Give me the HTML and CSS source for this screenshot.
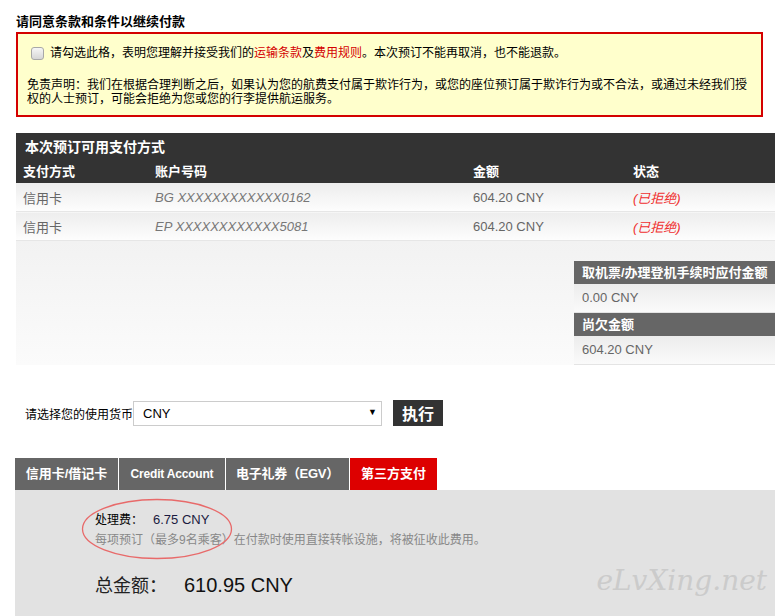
FILE: index.html
```html
<!DOCTYPE html>
<html lang="zh-CN">
<head>
  <meta charset="UTF-8">
  <title>付款</title>
  <link rel="stylesheet" href="styles.css">
</head>
<body>
  <div class="page">
    <h2 class="terms-title">请同意条款和条件以继续付款</h2>
    <div class="notice">
      <label class="agree"><input type="checkbox">请勾选此格，表明您理解并接受我们的<a href="#">运输条款</a>及<a href="#">费用规则</a>。本次预订不能再取消，也不能退款。</label>
      <p class="disclaimer">免责声明：我们在根据合理判断之后，如果认为您的航费支付属于欺诈行为，或您的座位预订属于欺诈行为或不合法，或通过未经我们授权的人士预订，可能会拒绝为您或您的行李提供航运服务。</p>
    </div>

    <table class="methods">
      <colgroup>
        <col style="width:132px">
        <col style="width:318px">
        <col style="width:160px">
        <col>
      </colgroup>
      <thead>
        <tr><th colspan="4" class="methods-title">本次预订可用支付方式</th></tr>
        <tr><th>支付方式</th><th>账户号码</th><th>金额</th><th>状态</th></tr>
      </thead>
      <tbody>
        <tr><td>信用卡</td><td class="acct">BG XXXXXXXXXXXX0162</td><td>604.20 CNY</td><td class="status">(已拒绝)</td></tr>
        <tr><td>信用卡</td><td class="acct">EP XXXXXXXXXXXX5081</td><td>604.20 CNY</td><td class="status">(已拒绝)</td></tr>
      </tbody>
    </table>

    <div class="due">
      <div class="due-panel">
        <div class="due-head">取机票/办理登机手续时应付金额</div>
        <div class="due-row">0.00 CNY</div>
        <div class="due-head">尚欠金额</div>
        <div class="due-row">604.20 CNY</div>
      </div>
    </div>

    <div class="currency">
      <span class="currency-label">请选择您的使用货币</span>
      <div class="select-wrap">
        <select class="currency-select">
          <option>CNY</option>
        </select>
        <span class="select-arrow">▼</span>
      </div>
      <button class="go-btn">执行</button>
    </div>

    <div class="tabs">
      <div class="tab tab-card">信用卡/借记卡</div>
      <div class="tab tab-credit">Credit Account</div>
      <div class="tab tab-egv">电子礼券（EGV）</div>
      <div class="tab tab-third active">第三方支付</div>
    </div>
    <div class="tab-body">
      <svg class="circle-mark" width="152" height="62" viewBox="0 0 152 62">
        <ellipse cx="76" cy="31" rx="74.5" ry="29.5" fill="none" stroke="#e86a6a" stroke-width="1.3"/>
      </svg>
      <div class="fee-line"><span class="fee-label">处理费：</span><span class="fee-amount">6.75 CNY</span></div>
      <div class="fee-note">每项预订（最多9名乘客）在付款时使用直接转帐设施，将被征收此费用。</div>
      <div class="total"><span class="total-label">总金额：</span><span class="total-amount">610.95 CNY</span></div>
      <div class="watermark">eLvXing.net</div>
    </div>
  </div>
</body>
</html>
```

FILE: styles.css
```css
html, body {
  margin: 0;
  padding: 0;
  background: #fff;
  font-family: 'Liberation Sans', 'Noto Sans CJK SC', sans-serif;
  font-size: 12px;
  color: #000;
}

.page {
  width: 760px;
  padding: 14px 0 0 15px;
}

.terms-title {
  margin: 0 0 2px 1px;
  font-size: 13px;
  line-height: 16px;
  font-weight: bold;
}

/* yellow agreement box */
.notice {
  margin-left: 1px;
  width: 747px;
  box-sizing: border-box;
  border: 2px solid #d40000;
  background: #ffffcc;
  padding: 11px 10px 9px 9px;
}

.agree {
  display: flex;
  align-items: center;
  line-height: 16px;
  padding-left: 4px;
}

.agree input {
  appearance: none;
  -webkit-appearance: none;
  width: 13px;
  height: 13px;
  margin: 0 6px 0 0;
  border: 1px solid #a8a8a8;
  border-radius: 3px;
  background: linear-gradient(#f6f6f6, #d6d6d6);
  box-sizing: border-box;
}

.agree a {
  color: #d40000;
  text-decoration: none;
}

.disclaimer {
  margin: 17px 0 0;
  line-height: 14px;
}

/* payment methods */
.methods {
  margin: 16px 0 0 1px;
  width: 759px;
  border-collapse: collapse;
  table-layout: fixed;
}

.methods th {
  background: #333;
  color: #fff;
  font-size: 13px;
  font-weight: bold;
  text-align: left;
  height: 25px;
  padding: 0 0 0 7px;
}

.methods th.methods-title {
  font-size: 14px;
  padding-left: 9px;
}

.methods td {
  height: 28px;
  padding: 0 0 0 7px;
  font-size: 13px;
  color: #666;
  background: linear-gradient(#ededed, #fdfdfd);
  border-bottom: 1px solid #e6e6e6;
}

.methods td.acct {
  font-style: italic;
  color: #777;
}

.methods td.status {
  font-style: italic;
  color: #f03030;
}

.due {
  margin-left: 1px;
  width: 759px;
  padding-top: 20px;
  display: flex;
  justify-content: flex-end;
  background: linear-gradient(#f2f2f2, #fbfbfb);
}

.due-panel {
  width: 201px;
}

.due-head {
  height: 23px;
  line-height: 23px;
  padding-left: 8px;
  background: #666;
  color: #fff;
  font-size: 13px;
  font-weight: bold;
}

.due-row {
  height: 28px;
  line-height: 28px;
  padding-left: 8px;
  font-size: 13px;
  color: #666;
  background: linear-gradient(#ececec, #fafafa);
  border-bottom: 1px solid #e4e4e4;
}

/* currency selector */
.currency {
  display: flex;
  align-items: center;
  height: 26px;
  margin-top: 35px;
  padding-left: 10px;
}

.currency-label {
  font-size: 12px;
  width: 108px;
}

.select-wrap {
  position: relative;
}

.currency-select {
  appearance: none;
  -webkit-appearance: none;
  width: 249px;
  height: 25px;
  border: 1px solid #ccc;
  border-radius: 0;
  background: #fff;
  padding: 0 0 0 9px;
  font-family: 'Liberation Sans', sans-serif;
  font-size: 13px;
  color: #000;
  outline: none;
}

.select-arrow {
  position: absolute;
  right: 5px;
  top: 6px;
  font-size: 9px;
  color: #000;
  pointer-events: none;
}

.go-btn {
  margin-left: 11px;
  width: 50px;
  height: 26px;
  border: 0;
  padding: 0;
  background: #333;
  color: #fff;
  font-family: 'Liberation Sans', 'Noto Sans CJK SC', sans-serif;
  font-size: 16px;
  font-weight: bold;
}

/* tabs */
.tabs {
  display: flex;
  gap: 1px;
  margin-top: 32px;
}

.tab {
  position: relative;
  height: 32px;
  line-height: 32px;
  background: #666;
  color: #fff;
  font-size: 13px;
  font-weight: bold;
  text-align: center;
  white-space: nowrap;
}

.tab-card { width: 103px; }
.tab-credit { width: 106px; font-size: 12px; letter-spacing: -0.2px; }
.tab-egv { width: 123px; letter-spacing: -0.3px; }
.tab-third { width: 87px; }

.tab.active {
  background: #dd0000;
}

.tab.active::after {
  content: "";
  position: absolute;
  left: 50%;
  bottom: -7px;
  margin-left: -7px;
  border-top: 7px solid #dd0000;
  border-left: 7px solid transparent;
  border-right: 7px solid transparent;
}

.tab-body {
  position: relative;
  background: #e2e2e2;
  padding: 22px 0 30px 80px;
}

.circle-mark {
  position: absolute;
  left: 66px;
  top: 8px;
}

.fee-line {
  line-height: 16px;
}

.fee-label {
  font-size: 12px;
}

.fee-amount {
  margin-left: 10px;
  font-size: 13px;
  color: #1a1a40;
}

.fee-note {
  margin-top: 4px;
  line-height: 16px;
  color: #888;
}

.total {
  margin-top: 24px;
  line-height: 26px;
}

.total-label {
  font-size: 18px;
  color: #222;
}

.total-amount {
  margin-left: 17px;
  font-size: 20px;
  color: #111;
}

.watermark {
  position: absolute;
  right: 8px;
  top: 74px;
  font-family: 'DejaVu Serif', serif;
  font-style: italic;
  font-size: 28px;
  color: #cbcbcb;
}
```
